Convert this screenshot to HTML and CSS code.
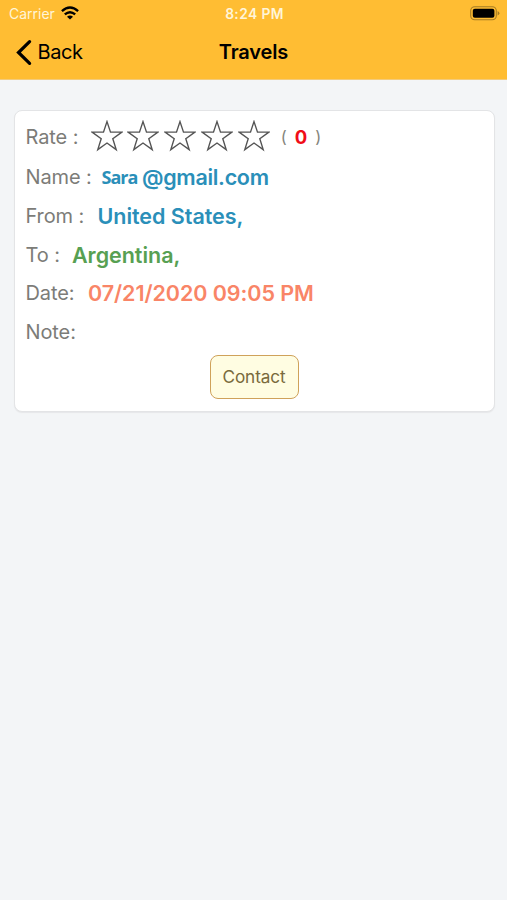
FILE: index.html
```html
<!DOCTYPE html>
<html lang="en">
<head>
<meta charset="utf-8">
<title>Travels</title>
<link rel="stylesheet" href="styles.css">
</head>
<body>
<header class="header">
  <div class="status">
    <div class="carrier"><span class="carrier-name">Carrier</span>
      <svg class="wifi" width="18" height="14" viewBox="0 0 18 14" fill="none" stroke="#000" stroke-width="2.4"><path d="M.9 5.1Q9-1.9 17.1 5.1M3.8 8.4Q9 4 14.2 8.4"/><path d="M9 13.6L6 10.7Q9 8.4 12 10.7Z" fill="#000" stroke="none"/></svg>
    </div>
    <div class="time">8:24 PM</div>
    <div class="battery">
      <svg width="30" height="15" viewBox="0 0 30 15"><rect x=".7" y=".7" width="25.6" height="13" rx="4" fill="none" stroke="#a57c24" stroke-width="1.1"/><rect x="2.8" y="2.7" width="21.6" height="9" rx="2" fill="#000"/><path d="M27.6 5v4.5Q29.4 8.7 29.4 7.2T27.6 5Z" fill="#a57c24"/></svg>
    </div>
  </div>
  <nav class="nav">
    <a class="back"><svg width="17" height="27" viewBox="0 0 17 27" fill="none" stroke="#000" stroke-width="3.2" stroke-linecap="round"><path d="M13.6 2.6L2.5 13.5L13.6 24.4"/></svg><span class="back-text">Back</span></a>
    <h1 class="title">Travels</h1>
  </nav>
</header>
<main class="card">
  <div class="row rate">
    <span class="label">Rate :</span>
    <div class="stars">
      <svg class="star" viewBox="0 0 32 32"><path d="M16 1.6L19.5 12.1H30.9L21.8 18.7L25.2 29.6L16 23L6.8 29.6L10.2 18.7L1.1 12.1H12.5Z"/></svg>
      <svg class="star" viewBox="0 0 32 32"><path d="M16 1.6L19.5 12.1H30.9L21.8 18.7L25.2 29.6L16 23L6.8 29.6L10.2 18.7L1.1 12.1H12.5Z"/></svg>
      <svg class="star" viewBox="0 0 32 32"><path d="M16 1.6L19.5 12.1H30.9L21.8 18.7L25.2 29.6L16 23L6.8 29.6L10.2 18.7L1.1 12.1H12.5Z"/></svg>
      <svg class="star" viewBox="0 0 32 32"><path d="M16 1.6L19.5 12.1H30.9L21.8 18.7L25.2 29.6L16 23L6.8 29.6L10.2 18.7L1.1 12.1H12.5Z"/></svg>
      <svg class="star" viewBox="0 0 32 32"><path d="M16 1.6L19.5 12.1H30.9L21.8 18.7L25.2 29.6L16 23L6.8 29.6L10.2 18.7L1.1 12.1H12.5Z"/></svg>
    </div>
    <div class="count"><span>(</span><b>0</b><span>)</span></div>
  </div>
  <div class="row name"><span class="label">Name :</span><span class="user">Sara</span><span class="value blue mail">@gmail.com</span></div>
  <div class="row from"><span class="label">From :</span><span class="value blue">United States,</span></div>
  <div class="row to"><span class="label">To :</span><span class="value green">Argentina,</span></div>
  <div class="row date"><span class="label">Date:</span><span class="value coral">07/21/2020 09:05 PM</span></div>
  <div class="row note"><span class="label">Note:</span></div>
  <button class="contact">Contact</button>
</main>
</body>
</html>
```
FILE: styles.css
```css
* { box-sizing: border-box; }
body {
  margin: 0;
  min-height: 900px;
  background: #f3f5f7;
  font-family: Inter, "Liberation Sans", sans-serif;
}
.header { height: 80px; background: #ffbd33; border-bottom: 1px solid #f3cb7c; }
.status, .nav { display: grid; grid-template-columns: 1fr auto 1fr; align-items: center; }
.status { height: 26px; padding: 0 7px 0 9px; font-size: 14px; color: #fff5d8; }
.carrier { display: flex; align-items: center; gap: 6px; }
.time { padding-top: 2px; font-weight: 600; font-size: 13.8px; letter-spacing: .4px; }
.battery { justify-self: end; display: flex; }
.nav { height: 52px; padding: 0 16px; color: #000; }
.back { display: flex; align-items: center; gap: 4.5px; font-size: 20px; letter-spacing: -.4px; }
.title { margin: 0; font-size: 20px; font-weight: 590; letter-spacing: -.15px; }
.card {
  width: 481px;
  height: 302px;
  margin: 29.5px 0 0 13.5px;
  padding: 5.5px 11px 0;
  display: flex;
  flex-direction: column;
  background: #fff;
  border: 1px solid #e3e4e6;
  border-radius: 8px;
  box-shadow: 0 1px 1px #e6e7e9;
}
.row { display: flex; align-items: center; height: 38.7px; white-space: nowrap; }
.rate, .name { height: 40px; }
.label { flex: none; padding-top: 1.5px; font-size: 20px; color: #7c7c78; letter-spacing: -.1px; }
.value { padding-top: 1px; font-size: 21.5px; font-weight: 600; letter-spacing: -.03px; }
.mail { letter-spacing: -.3px; }
.date .value { padding-top: 0; letter-spacing: -.07px; }
.rate .label { width: 65px; }
.name .label { width: 76px; }
.from .label { width: 72px; }
.to .label { width: 46.5px; }
.date .label { width: 62.5px; padding-top: 0; }
.blue { color: #2a8fb9; }
.green { color: #57a052; }
.coral { color: #f98567; }
.user { width: 40.5px; padding-top: 1px; font: 700 18px "Open Sans", sans-serif; letter-spacing: -1px; color: #2a8fb9; }
.stars { display: flex; gap: 4.8px; }
.star { width: 32px; height: 32px; fill: none; stroke: #555; stroke-width: 1.4; }
.count { display: flex; align-items: center; gap: 8px; margin-left: 11px; padding-top: 1px; font-size: 16.5px; color: #85857c; }
.count b { color: #f00d18; font-size: 18.5px; font-weight: 650; }
.contact {
  width: 89px;
  height: 44px;
  margin: 4px auto 0;
  padding: 0;
  border: 1.5px solid #cfa25a;
  border-radius: 8px;
  background: #fffde2;
  color: #796a3c;
  font: 17.2px Inter, sans-serif;
  letter-spacing: -.1px;
}
```
